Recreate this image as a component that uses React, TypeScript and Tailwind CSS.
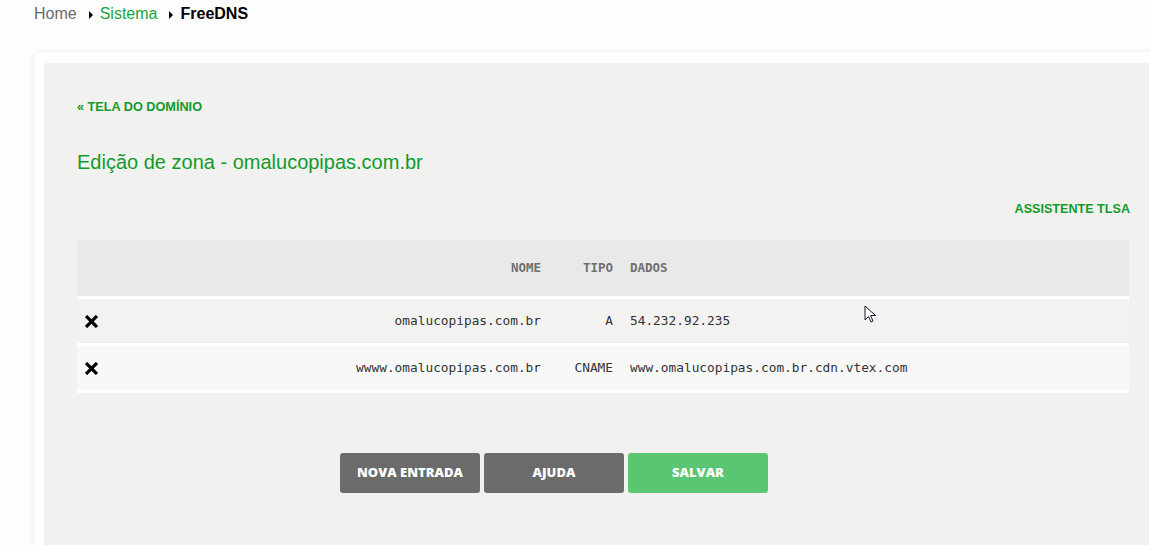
const records = [
  { nome: 'omalucopipas.com.br', tipo: 'A', dados: '54.232.92.235', bg: 'bg-[#f2f2f0]' },
  { nome: 'wwww.omalucopipas.com.br', tipo: 'CNAME', dados: 'www.omalucopipas.com.br.cdn.vtex.com', bg: 'bg-[#f8f8f8]' },
]

function RemoveIcon() {
  return (
    <svg className="w-[13px] h-[13px]" viewBox="0 0 12 12">
      <path d="M2 2L10 10M10 2L2 10" stroke="#000" strokeWidth={3} strokeLinecap="square" />
    </svg>
  )
}

function Caret() {
  return <span className="inline-block w-0 h-0 border-y-[4px] border-y-transparent border-l-[4px] border-l-black ml-[12px] mr-[7px] mt-[2px]" />
}

export default function App() {
  return (
    <div className="relative h-[545px] w-[1150px] overflow-hidden bg-[#fdfdfd] font-['Liberation_Sans',Arial,sans-serif]">
      {/* Breadcrumb */}
      <div className="h-[52px] pl-[34px] pt-[3px]">
        <div className="h-[22px] text-[16px] leading-[22px] flex items-center">
          <span className="text-[#6b6b6b]">Home</span>
          <Caret />
          <span className="text-[#1aa33a]">Sistema</span>
          <Caret />
          <span className="font-bold text-black">FreeDNS</span>
        </div>
      </div>

      {/* Card */}
      <div className="ml-[34px] w-[1150px] h-[520px] bg-white rounded-tl-[8px] shadow-[0_0_6px_rgba(0,0,0,0.08)] pl-[10px] pt-[11px]">
        <div className="w-[1105px] h-[500px] bg-[#f1f1ef] pl-[33px] pr-[20px] pt-[36px]">
          <a className="block text-[12.7px] leading-[16px] font-bold text-[#119b2c]">« TELA DO DOMÍNIO</a>
          <h1 className="mt-[35px] text-[20px] leading-[24px] text-[#119b2c]">Edição de zona - omalucopipas.com.br</h1>
          <div className="mt-[27px] flex justify-end">
            <a className="text-[12.6px] leading-[16px] font-bold text-[#119b2c] mr-[-1px]">ASSISTENTE TLSA</a>
          </div>

          {/* Records table */}
          <div className="mt-[23px] font-['DejaVu_Sans_Mono',monospace] text-[12.8px]">
            <div className="grid grid-cols-[464px_72px_1fr] h-[56px] items-center bg-[#e9e9e9] font-bold text-[#6f6f6f] text-[12.5px]">
              <div className="text-right">NOME</div>
              <div className="text-right">TIPO</div>
              <div className="pl-[17px]">DADOS</div>
            </div>
            {records.map((r) => (
              <div key={r.nome} className={`grid grid-cols-[464px_72px_1fr] h-[47px] items-center border-t-[3px] border-white ${r.bg} text-[#333]`}>
                <div className="flex items-center justify-between pl-[8px]">
                  <RemoveIcon />
                  <span>{r.nome}</span>
                </div>
                <div className="text-right">{r.tipo}</div>
                <div className="pl-[17px]">{r.dados}</div>
              </div>
            ))}
            <div className="h-[3px] bg-white" />
          </div>

          {/* Actions */}
          <div className="mt-[60px] ml-[263px] flex gap-[4px] font-['Open_Sans',sans-serif] text-[13px] font-extrabold text-white">
            <button className="w-[140px] h-[40px] rounded-[3px] bg-[#6b6b6b]">NOVA ENTRADA</button>
            <button className="w-[140px] h-[40px] rounded-[3px] bg-[#6b6b6b]">AJUDA</button>
            <button className="w-[140px] h-[40px] rounded-[3px] bg-[#5ac674]">SALVAR</button>
          </div>
        </div>
      </div>

      {/* Mouse pointer */}
      <svg className="absolute left-[864px] top-[305px] w-[13px] h-[20px]" viewBox="0 0 13 20">
        <path d="M1 1L1 15L4.5 11.5L7 17L9 16L6.5 10.5L11.5 10.5Z" fill="#fff" stroke="#1a1a2e" strokeWidth={1} strokeLinejoin="round" />
      </svg>
    </div>
  )
}
